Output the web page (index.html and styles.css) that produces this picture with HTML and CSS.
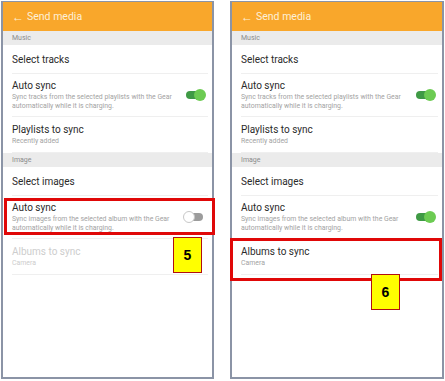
FILE: index.html
```html
<!DOCTYPE html>
<html lang="en">
<head>
  <meta charset="UTF-8">
  <title>Send media</title>
  <link rel="stylesheet" href="styles.css">
</head>
<body>
  <div class="shots">

    <!-- screen 5: image auto sync off -->
    <div class="phone">
      <div class="appbar"><span class="back">&#8592;</span> Send media</div>
      <div class="group">Music</div>
      <div class="row single"><div class="title">Select tracks</div></div>
      <div class="row toggle-row">
        <div class="text">
          <div class="title">Auto sync</div>
          <div class="sub">Sync tracks from the selected playlists with the Gear<br>automatically while it is charging.</div>
        </div>
        <span class="switch on"></span>
      </div>
      <div class="row double">
        <div class="title">Playlists to sync</div>
        <div class="sub">Recently added</div>
      </div>
      <div class="group">Image</div>
      <div class="row single"><div class="title">Select images</div></div>
      <div class="row toggle-row">
        <div class="text">
          <div class="title">Auto sync</div>
          <div class="sub">Sync images from the selected album with the Gear<br>automatically while it is charging.</div>
        </div>
        <span class="switch off"></span>
      </div>
      <div class="row double disabled">
        <div class="title">Albums to sync</div>
        <div class="sub">Camera</div>
      </div>

      <div class="mark mark-5"></div>
      <div class="badge badge-5">5</div>
    </div>

    <!-- screen 6: image auto sync on -->
    <div class="phone">
      <div class="appbar"><span class="back">&#8592;</span> Send media</div>
      <div class="group">Music</div>
      <div class="row single"><div class="title">Select tracks</div></div>
      <div class="row toggle-row">
        <div class="text">
          <div class="title">Auto sync</div>
          <div class="sub">Sync tracks from the selected playlists with the Gear<br>automatically while it is charging.</div>
        </div>
        <span class="switch on"></span>
      </div>
      <div class="row double">
        <div class="title">Playlists to sync</div>
        <div class="sub">Recently added</div>
      </div>
      <div class="group">Image</div>
      <div class="row single"><div class="title">Select images</div></div>
      <div class="row toggle-row">
        <div class="text">
          <div class="title">Auto sync</div>
          <div class="sub">Sync images from the selected album with the Gear<br>automatically while it is charging.</div>
        </div>
        <span class="switch on"></span>
      </div>
      <div class="row double">
        <div class="title">Albums to sync</div>
        <div class="sub">Camera</div>
      </div>

      <div class="mark mark-6"></div>
      <div class="badge badge-6">6</div>
    </div>

  </div>
</body>
</html>
```
FILE: styles.css
```css
body {
  margin: 0;
  background: #fff;
  font-family: Roboto, "Noto Sans", sans-serif;
}

.shots {
  display: flex;
  gap: 16px;
  padding: 1px 0 0 1px;
}

.phone {
  position: relative;
  width: 209px;
  height: 375px;
  border: 2px solid #8b94a6;
  border-top-width: 1px;
  background: #fff;
}
.phone + .phone {
  width: 210px;
}

.appbar {
  height: 29px;
  background: #f9a72b;
  color: #fdf0d8;
  font-size: 10.5px;
  display: flex;
  align-items: center;
  padding-left: 9px;
}
.back {
  font-size: 12px;
  margin-right: 3px;
}

.group {
  height: 14px;
  background: #ebebeb;
  color: #8c8c8c;
  font-size: 7px;
  display: flex;
  align-items: center;
  padding-left: 9px;
}

.row {
  margin: 0 4px 0 9px;
  border-bottom: 1px solid #efefef;
  display: flex;
  flex-direction: column;
  justify-content: center;
}
.row.single { height: 28px; }
.row.double { height: 35px; }
.row.toggle-row {
  height: 42px;
  flex-direction: row;
  align-items: center;
  justify-content: space-between;
}
.toggle-row .text {
  margin-top: 1px;
}

.title {
  font-size: 10px;
  color: #2a2a2a;
}
.sub {
  font-size: 6.9px;
  line-height: 9px;
  color: #a3a3a3;
  margin-top: 2px;
}
.disabled .title,
.disabled .sub {
  color: #cdcdcd;
}

.switch {
  position: relative;
  width: 17px;
  height: 8px;
  border-radius: 4px;
  margin-right: 5px;
  flex: none;
}
.switch::after {
  content: "";
  position: absolute;
  top: -2px;
  width: 12px;
  height: 12px;
  border-radius: 50%;
}
.switch.on { background: #3f9a45; }
.switch.on::after { right: -3px; background: #6ccb52; }
.switch.off { background: #9c9c9c; }
.switch.off::after { left: -3px; background: #fff; border: 1px solid #c8c8c8; width: 10px; height: 10px; }

/* annotation overlays */
.mark {
  position: absolute;
  border: 3px solid #e00808;
}
.mark-5 { left: 1px; top: 196px; width: 205px; height: 31px; }
.mark-6 { left: -2px; top: 236px; width: 206px; height: 37px; }

.badge {
  position: absolute;
  width: 29px;
  height: 36px;
  background: #ffff00;
  border: 1px solid #b01010;
  box-sizing: border-box;
  display: flex;
  align-items: center;
  justify-content: center;
  font-family: "Liberation Sans", Arial, sans-serif;
  font-weight: bold;
  font-size: 14px;
  color: #000;
}
.badge-5 { left: 170px; top: 235px; }
.badge-6 { left: 139px; top: 272px; }
```
